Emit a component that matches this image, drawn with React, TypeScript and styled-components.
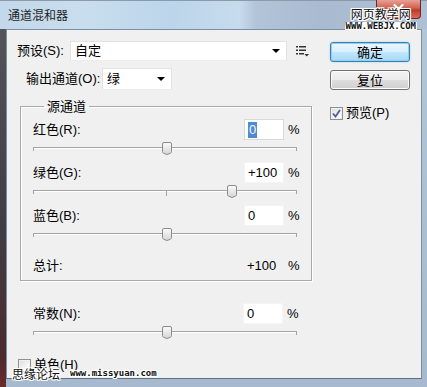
import React from "react";
import styled, { createGlobalStyle, css } from "styled-components";

const UI_FONT = `"Liberation Sans", "Noto Sans CJK SC", sans-serif`;

const GlobalStyle = createGlobalStyle`
  html, body { margin: 0; padding: 0; background: #ffffff; }
  body { font-family: ${UI_FONT}; font-size: 13px; color: #000; }
  * { box-sizing: border-box; }
`;

const Window = styled.div`
  position: relative;
  width: 427px;
  height: 387px;
  display: flex;
  flex-direction: column;
  overflow: hidden;
  background:
    linear-gradient(180deg, #56565e 0%, #3f3d44 60%, #4a2b2e 92%, #6a2a2a 100%) left top / 6px 100% no-repeat,
    linear-gradient(180deg, #b4c6da 0%, #a6b9cf 100%);
`;

const TitleBar = styled.div`
  position: relative;
  height: 29px;
  flex: none;
  display: flex;
  align-items: center;
  padding-left: 8px;
  background: linear-gradient(
    90deg,
    #c3d8ea 0%,
    #c8deee 20%,
    #bcd5ea 40%,
    #c6dced 56%,
    #b2c4d8 60%,
    #a9bbd0 75%,
    #aec0d4 100%
  );
  border-top: 1px solid #8c9aaa;
`;

const Title = styled.span`
  font-family: "Noto Sans CJK SC", sans-serif;
  font-size: 12px;
  line-height: 16px;
  color: #1e1e1e;
`;

const CloseButton = styled.div`
  position: absolute;
  top: -1px;
  right: 6px;
  width: 45px;
  height: 19px;
  border: 1px solid #6b2a22;
  border-top: none;
  border-radius: 0 0 4px 4px;
  background: linear-gradient(180deg, #e8a195 0%, #d0604f 45%, #c0392b 55%, #d86a55 100%);
  display: flex;
  align-items: center;
  justify-content: center;
`;

const TopMark = styled.div`
  position: absolute;
  top: 6px;
  right: 10px;
  display: flex;
  flex-direction: column;
  align-items: center;
  gap: 2px;
`;

const outline = css`
  text-shadow:
    1px 0 0 #fff, -1px 0 0 #fff, 0 1px 0 #fff, 0 -1px 0 #fff,
    1px 1px 0 #fff, -1px -1px 0 #fff, 1px -1px 0 #fff, -1px 1px 0 #fff;
`;

const MarkCn = styled.span`
  font-family: "Noto Sans CJK SC", sans-serif;
  font-size: 12px;
  line-height: 13px;
  color: #111;
  ${outline}
`;

const MarkEn = styled.span`
  font-family: "DejaVu Sans Mono", monospace;
  font-weight: bold;
  font-size: 9px;
  line-height: 8px;
  color: #111;
  background: #fff;
  padding: 0 1px;
`;

const BottomMark = styled.div`
  position: absolute;
  left: 12px;
  bottom: 7px;
  display: flex;
  align-items: flex-end;
  gap: 10px;
`;

const BottomCn = styled.span`
  font-family: "Noto Sans CJK SC", sans-serif;
  font-size: 12px;
  line-height: 13px;
  color: #111;
  ${outline}
`;

const BottomEn = styled.span`
  font-family: "DejaVu Sans Mono", monospace;
  font-weight: bold;
  font-size: 9px;
  line-height: 8px;
  color: #111;
  margin-bottom: 3px;
  ${outline}
`;

const Content = styled.div`
  flex: 1;
  margin: 0 5px 8px 6px;
  border: 1px solid #7d8ea3;
  border-bottom-color: #5f6e80;
  background: #f0f0f0;
  display: flex;
  padding: 11px 0 0 10px;
`;

const LeftCol = styled.div`
  width: 296px;
  display: flex;
  flex-direction: column;
`;

const RightCol = styled.div`
  width: 80px;
  margin-left: 17px;
  padding-top: 1px;
  display: flex;
  flex-direction: column;
`;

const FieldRow = styled.div<{ $top?: number; $indent?: number; $h: number }>`
  display: flex;
  align-items: center;
  height: ${(p) => p.$h}px;
  margin-top: ${(p) => p.$top ?? 0}px;
  padding-left: ${(p) => p.$indent ?? 0}px;
`;

const FieldLabel = styled.span<{ $w: number }>`
  width: ${(p) => p.$w}px;
  flex: none;
  line-height: 16px;
  white-space: nowrap;
`;

const Combo = styled.div<{ $w: number; $h: number }>`
  width: ${(p) => p.$w}px;
  height: ${(p) => p.$h}px;
  background: #fff;
  border: 1px solid #e2e2e2;
  border-bottom-color: #ececec;
  display: flex;
  align-items: center;
  justify-content: space-between;
  padding: 0 6px 0 4px;
`;

const ComboText = styled.span`
  line-height: 16px;
`;

const Arrow = styled.span`
  width: 0;
  height: 0;
  border-left: 4px solid transparent;
  border-right: 4px solid transparent;
  border-top: 4px solid #000;
`;

const MenuIcon = styled.svg`
  margin-left: 9px;
  flex: none;
`;

const Group = styled.fieldset`
  margin: 8px 0 0 3px;
  width: 292px;
  height: 183px;
  border: 1px solid #a9a9a9;
  box-shadow: inset 1px 1px 0 #fff, 1px 1px 0 #fff;
  padding: 5px 11px 0 12px;
  min-width: 0;
`;

const GroupTitle = styled.legend`
  margin-left: 11px;
  padding: 0 3px;
  line-height: 16px;
  font-family: "Noto Sans CJK SC", sans-serif;
  font-size: 13px;
`;

const ValueRow = styled.div<{ $top?: number; $h?: number }>`
  display: flex;
  align-items: center;
  height: ${(p) => p.$h ?? 21}px;
  margin-top: ${(p) => p.$top ?? 0}px;
`;

const RowLabel = styled.span`
  flex: 1;
  line-height: 16px;
  white-space: nowrap;
`;

const NumberBox = styled.div<{ $border?: boolean }>`
  width: 40px;
  height: 21px;
  flex: none;
  background: #fff;
  border: 1px solid ${(p) => (p.$border ? "#d9d9d9" : "#f4f4f4")};
  display: flex;
  align-items: center;
  padding-left: 3px;
  line-height: 16px;
`;

const Selected = styled.span`
  background: #4f8ccf;
  color: #f4f8ff;
  padding: 0 1px;
  line-height: 16px;
`;

const Percent = styled.span`
  width: 12px;
  margin-left: 4px;
  flex: none;
  line-height: 16px;
`;

const TotalValue = styled.span`
  width: 40px;
  flex: none;
  padding-left: 3px;
  line-height: 16px;
`;

const SliderBlock = styled.div`
  height: 22px;
  padding-top: 7px;
`;

const Track = styled.div`
  position: relative;
  width: 264px;
  height: 2px;
  border-top: 1px solid #a3a3a3;
  border-bottom: 1px solid #ffffff;
  &::before,
  &::after {
    content: "";
    position: absolute;
    top: 0;
    width: 1px;
    height: 3px;
    background: #a3a3a3;
  }
  &::before { left: 0; }
  &::after { right: 0; }
`;

const CenterTick = styled.span`
  position: absolute;
  left: 133px;
  top: 0;
  width: 1px;
  height: 5px;
  background: #a3a3a3;
`;

const Thumb = styled.svg`
  position: absolute;
  top: -6px;
`;

const Button = styled.div<{ $primary?: boolean }>`
  height: 20px;
  display: flex;
  align-items: center;
  justify-content: center;
  border-radius: 3px;
  font-family: "Noto Sans CJK SC", sans-serif;
  font-size: 13px;
  line-height: 16px;
  ${(p) =>
    p.$primary
      ? css`
          border: 1px solid #3c7fb1;
          background: linear-gradient(180deg, #eaf6fd 0%, #d9f0fc 48%, #bee6fd 52%, #a7d9f5 100%);
          box-shadow: inset 0 0 0 1px #8fd0f0, 0 0 2px #9ccbe8;
        `
      : css`
          border: 1px solid #707070;
          background: linear-gradient(180deg, #f2f2f2 0%, #ebebeb 48%, #dddddd 52%, #cfcfcf 100%);
          box-shadow: inset 0 0 0 1px #fcfcfc;
        `}
  & + & {
    margin-top: 8px;
  }
`;

const CheckRow = styled.div<{ $top: number; $indent?: number }>`
  display: flex;
  align-items: center;
  gap: 3px;
  margin-top: ${(p) => p.$top}px;
  padding-left: ${(p) => p.$indent ?? 0}px;
`;

const Box = styled.span`
  width: 13px;
  height: 13px;
  flex: none;
  border: 1px solid #8e8f8f;
  background: linear-gradient(135deg, #dcdcdc 0%, #f4f4f4 60%, #ffffff 100%);
  box-shadow: inset 0 0 0 1px #f0f0f0;
  display: flex;
  align-items: center;
  justify-content: center;
`;

const CheckText = styled.span`
  line-height: 16px;
`;

const ConstBlock = styled.div`
  margin-top: 22px;
  padding-left: 16px;
  width: 282px;
`;

const ThumbIcon = ({ f }: { f: number }) => (
  <Thumb width="10" height="13" viewBox="0 0 10 13" style={{ left: `${3.5 + 260 * f - 5}px` }}>
    <defs>
      <linearGradient id="tg" x1="0" y1="0" x2="0" y2="1">
        <stop offset="0" stopColor="#fbfbfb" />
        <stop offset="1" stopColor="#d4d4d4" />
      </linearGradient>
    </defs>
    <path
      d="M2 0.5 H8 Q9.5 0.5 9.5 2 V9.5 Q9.5 10.5 8.5 11.2 L5 12.5 L1.5 11.2 Q0.5 10.5 0.5 9.5 V2 Q0.5 0.5 2 0.5 Z"
      fill="url(#tg)"
      stroke="#8b8b8b"
    />
  </Thumb>
);

const Slider = ({ f }: { f: number }) => (
  <SliderBlock>
    <Track>
      <CenterTick />
      <ThumbIcon f={f} />
    </Track>
  </SliderBlock>
);

type Channel = { label: string; value: string; f: number; selected?: boolean };

const channels: Channel[] = [
  { label: "红色(R):", value: "0", f: 0.5, selected: true },
  { label: "绿色(G):", value: "+100", f: 0.75 },
  { label: "蓝色(B):", value: "0", f: 0.5 },
];

const ValueField = ({ c }: { c: Channel }) => (
  <>
    <ValueRow>
      <RowLabel>{c.label}</RowLabel>
      <NumberBox $border={c.selected}>
        {c.selected ? <Selected>{c.value}</Selected> : c.value}
      </NumberBox>
      <Percent>%</Percent>
    </ValueRow>
    <Slider f={c.f} />
  </>
);

export default function App() {
  return (
    <>
      <GlobalStyle />
      <Window>
        <TitleBar>
          <Title>通道混和器</Title>
          <CloseButton>
            <svg width="11" height="10" viewBox="0 0 11 10">
              <path d="M1.5 1 L9.5 9 M9.5 1 L1.5 9" stroke="#fff" strokeWidth="2.2" strokeLinecap="round" />
            </svg>
          </CloseButton>
          <TopMark>
            <MarkCn>网页教学网</MarkCn>
            <MarkEn>WWW.WEBJX.COM</MarkEn>
          </TopMark>
        </TitleBar>
        <Content>
          <LeftCol>
            <FieldRow $h={20}>
              <FieldLabel $w={53}>预设(S):</FieldLabel>
              <Combo $w={217} $h={20}>
                <ComboText>自定</ComboText>
                <Arrow />
              </Combo>
              <MenuIcon width="14" height="12" viewBox="0 0 14 12">
                <g fill="#333">
                  <rect x="0" y="1" width="2" height="1.5" />
                  <rect x="3" y="1" width="7" height="1.5" />
                  <rect x="0" y="4.5" width="2" height="1.5" />
                  <rect x="3" y="4.5" width="7" height="1.5" />
                  <rect x="0" y="8" width="2" height="1.5" />
                  <rect x="3" y="8" width="5" height="1.5" />
                  <path d="M8.5 9 H13 L10.75 11.5 Z" />
                </g>
              </MenuIcon>
            </FieldRow>
            <FieldRow $h={22} $top={7} $indent={9}>
              <FieldLabel $w={76}>输出通道(O):</FieldLabel>
              <Combo $w={70} $h={22}>
                <ComboText>绿</ComboText>
                <Arrow />
              </Combo>
            </FieldRow>
            <Group>
              <GroupTitle>源通道</GroupTitle>
              {channels.map((c) => (
                <ValueField key={c.label} c={c} />
              ))}
              <ValueRow $top={9} $h={18}>
                <RowLabel>总计:</RowLabel>
                <TotalValue>+100</TotalValue>
                <Percent>%</Percent>
              </ValueRow>
            </Group>
            <ConstBlock>
              <ValueField c={{ label: "常数(N):", value: "0", f: 0.5 }} />
            </ConstBlock>
            <CheckRow $top={11} $indent={1}>
              <Box />
              <CheckText>单色(H)</CheckText>
            </CheckRow>
          </LeftCol>
          <RightCol>
            <Button $primary>确定</Button>
            <Button>复位</Button>
            <CheckRow $top={15}>
              <Box>
                <svg width="9" height="9" viewBox="0 0 9 9">
                  <path d="M1 4.5 L3.5 7.5 L8 1" fill="none" stroke="#4a5f97" strokeWidth="1.8" />
                </svg>
              </Box>
              <CheckText>预览(P)</CheckText>
            </CheckRow>
          </RightCol>
        </Content>
        <BottomMark>
          <BottomCn>思缘论坛</BottomCn>
          <BottomEn>www.missyuan.com</BottomEn>
        </BottomMark>
      </Window>
    </>
  );
}
